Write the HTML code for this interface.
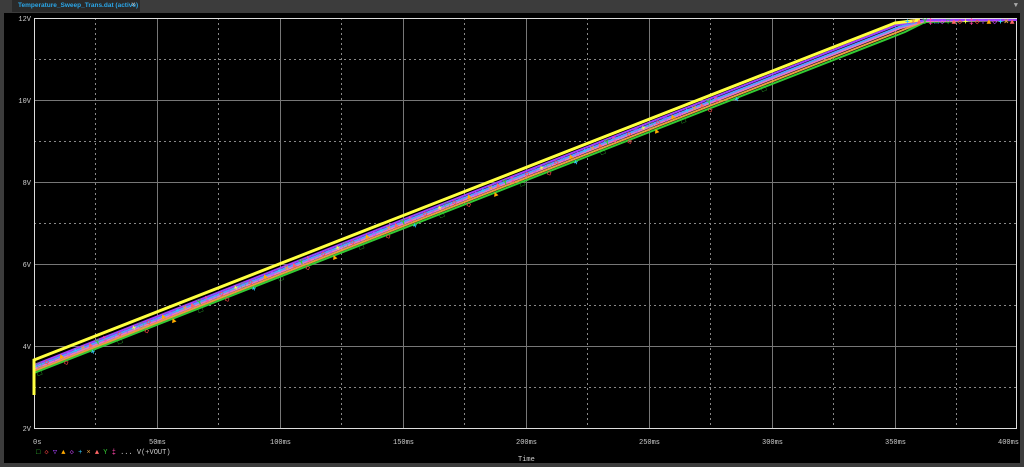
<!DOCTYPE html><html><head><style>
body{margin:0;width:1024px;height:467px;background:#3c3c3c;overflow:hidden;font-family:"Liberation Mono",monospace}
.tab{position:absolute;left:12px;top:0;width:128px;height:12px;background:#2a2a2a;color:#2aa6e8;font:bold 6.5px "Liberation Sans",sans-serif;line-height:12px;padding-left:6px;box-sizing:border-box;white-space:nowrap;overflow:hidden}
.x{position:absolute;left:131px;top:0;color:#bbb;font-size:8px;line-height:12px}
.main{position:absolute;left:4px;top:13px;width:1016px;height:450px;background:#000}
</style></head><body>
<div class="tab">Temperature_Sweep_Trans.dat (active)</div><div class="x">×</div>
<div style="position:absolute;right:6px;top:2px;color:#aaa;font-size:7px">▼</div>
<div class="main"></div>
<svg width="1024" height="467" style="position:absolute;left:0;top:0" font-family="Liberation Mono,monospace" font-size="7" fill="#ccc">
<defs>
<path id="p1" d="M38,368 L900,30"/>
<path id="p2" d="M38,376 L905,36"/>
<path id="p3" d="M905,24 L1017,24"/>
</defs>
<g stroke="#888" stroke-width="1" stroke-dasharray="2,3">
<line x1="34" x2="1017" y1="59.5" y2="59.5"/><line x1="34" x2="1017" y1="141.5" y2="141.5"/><line x1="34" x2="1017" y1="223.5" y2="223.5"/><line x1="34" x2="1017" y1="305.5" y2="305.5"/><line x1="34" x2="1017" y1="387.5" y2="387.5"/>
<line x1="95.5" x2="95.5" y1="18" y2="428"/><line x1="218.5" x2="218.5" y1="18" y2="428"/><line x1="341.5" x2="341.5" y1="18" y2="428"/><line x1="464.5" x2="464.5" y1="18" y2="428"/><line x1="587.5" x2="587.5" y1="18" y2="428"/><line x1="710.5" x2="710.5" y1="18" y2="428"/><line x1="833.5" x2="833.5" y1="18" y2="428"/><line x1="956.5" x2="956.5" y1="18" y2="428"/>
</g>
<g stroke="#777" stroke-width="1">
<line x1="34" x2="1017" y1="100.5" y2="100.5"/><line x1="34" x2="1017" y1="182.5" y2="182.5"/><line x1="34" x2="1017" y1="264.5" y2="264.5"/><line x1="34" x2="1017" y1="346.5" y2="346.5"/>
<line x1="157.5" x2="157.5" y1="18" y2="428"/><line x1="280.5" x2="280.5" y1="18" y2="428"/><line x1="403.5" x2="403.5" y1="18" y2="428"/><line x1="526.5" x2="526.5" y1="18" y2="428"/><line x1="649.5" x2="649.5" y1="18" y2="428"/><line x1="772.5" x2="772.5" y1="18" y2="428"/><line x1="895.5" x2="895.5" y1="18" y2="428"/>
</g>
<rect x="34.5" y="18.5" width="982" height="410" fill="none" stroke="#ddd"/>
<g fill="none" stroke-width="2">
<polyline stroke="#3c3" points="34,373 905,32 925,22 1017,20"/>
<polyline stroke="#e8a040" points="34,371 903,30 925,21 1017,20"/>
<polyline stroke="#e878c8" points="34,369 901,28 925,21 1017,20"/>
<polyline stroke="#58a0ff" points="34,367 899,27 925,20 1017,20"/>
<polyline stroke="#a040ff" points="34,365 897,25 925,20 1017,20"/>
<polyline stroke="#ffff40" stroke-width="3" points="34,395 34,360 895,23 920,20"/>
</g>
<g font-size="8" font-weight="bold" letter-spacing="3">
<text><textPath href="#p1"><tspan fill="#3c3">□</tspan><tspan fill="#f44">◇</tspan><tspan fill="#a4f">▽</tspan><tspan fill="#fa0">▲</tspan><tspan fill="#c4f">◇</tspan><tspan fill="#3cf">+</tspan><tspan fill="#e8a040">×</tspan><tspan fill="#f66">▲</tspan><tspan fill="#3c3">Y</tspan><tspan fill="#f4a">‡</tspan><tspan fill="#58f">□</tspan><tspan fill="#f44">◇</tspan><tspan fill="#a4f">▽</tspan><tspan fill="#ff4">+</tspan><tspan fill="#3c3">□</tspan><tspan fill="#f44">◇</tspan><tspan fill="#a4f">▽</tspan><tspan fill="#fa0">▲</tspan><tspan fill="#c4f">◇</tspan><tspan fill="#3cf">+</tspan><tspan fill="#e8a040">×</tspan><tspan fill="#f66">▲</tspan><tspan fill="#3c3">Y</tspan><tspan fill="#f4a">‡</tspan><tspan fill="#58f">□</tspan><tspan fill="#f44">◇</tspan><tspan fill="#a4f">▽</tspan><tspan fill="#ff4">+</tspan><tspan fill="#3c3">□</tspan><tspan fill="#f44">◇</tspan><tspan fill="#a4f">▽</tspan><tspan fill="#fa0">▲</tspan><tspan fill="#c4f">◇</tspan><tspan fill="#3cf">+</tspan><tspan fill="#e8a040">×</tspan><tspan fill="#f66">▲</tspan><tspan fill="#3c3">Y</tspan><tspan fill="#f4a">‡</tspan><tspan fill="#58f">□</tspan><tspan fill="#f44">◇</tspan><tspan fill="#a4f">▽</tspan><tspan fill="#ff4">+</tspan><tspan fill="#3c3">□</tspan><tspan fill="#f44">◇</tspan><tspan fill="#a4f">▽</tspan><tspan fill="#fa0">▲</tspan><tspan fill="#c4f">◇</tspan><tspan fill="#3cf">+</tspan><tspan fill="#e8a040">×</tspan><tspan fill="#f66">▲</tspan><tspan fill="#3c3">Y</tspan><tspan fill="#f4a">‡</tspan><tspan fill="#58f">□</tspan><tspan fill="#f44">◇</tspan><tspan fill="#a4f">▽</tspan><tspan fill="#ff4">+</tspan><tspan fill="#3c3">□</tspan><tspan fill="#f44">◇</tspan><tspan fill="#a4f">▽</tspan><tspan fill="#fa0">▲</tspan><tspan fill="#c4f">◇</tspan><tspan fill="#3cf">+</tspan><tspan fill="#e8a040">×</tspan><tspan fill="#f66">▲</tspan><tspan fill="#3c3">Y</tspan><tspan fill="#f4a">‡</tspan><tspan fill="#58f">□</tspan><tspan fill="#f44">◇</tspan><tspan fill="#a4f">▽</tspan><tspan fill="#ff4">+</tspan><tspan fill="#3c3">□</tspan><tspan fill="#f44">◇</tspan><tspan fill="#a4f">▽</tspan><tspan fill="#fa0">▲</tspan><tspan fill="#c4f">◇</tspan><tspan fill="#3cf">+</tspan><tspan fill="#e8a040">×</tspan><tspan fill="#f66">▲</tspan><tspan fill="#3c3">Y</tspan><tspan fill="#f4a">‡</tspan><tspan fill="#58f">□</tspan><tspan fill="#f44">◇</tspan><tspan fill="#a4f">▽</tspan><tspan fill="#ff4">+</tspan><tspan fill="#3c3">□</tspan><tspan fill="#f44">◇</tspan><tspan fill="#a4f">▽</tspan><tspan fill="#fa0">▲</tspan><tspan fill="#c4f">◇</tspan><tspan fill="#3cf">+</tspan><tspan fill="#e8a040">×</tspan><tspan fill="#f66">▲</tspan><tspan fill="#3c3">Y</tspan><tspan fill="#f4a">‡</tspan></textPath></text>
<text letter-spacing="24"><textPath href="#p2"><tspan fill="#3c3">□</tspan><tspan fill="#f44">◇</tspan><tspan fill="#3cf">+</tspan><tspan fill="#3c3">□</tspan><tspan fill="#f44">◇</tspan><tspan fill="#fa0">▲</tspan><tspan fill="#3c3">□</tspan><tspan fill="#f44">◇</tspan><tspan fill="#3cf">+</tspan><tspan fill="#3c3">□</tspan><tspan fill="#f44">◇</tspan><tspan fill="#fa0">▲</tspan><tspan fill="#3c3">□</tspan><tspan fill="#f44">◇</tspan><tspan fill="#3cf">+</tspan><tspan fill="#3c3">□</tspan><tspan fill="#f44">◇</tspan><tspan fill="#fa0">▲</tspan><tspan fill="#3c3">□</tspan><tspan fill="#f44">◇</tspan><tspan fill="#3cf">+</tspan><tspan fill="#3c3">□</tspan><tspan fill="#f44">◇</tspan><tspan fill="#fa0">▲</tspan><tspan fill="#3c3">□</tspan><tspan fill="#f44">◇</tspan><tspan fill="#3cf">+</tspan><tspan fill="#3c3">□</tspan></textPath></text>
<text letter-spacing="1"><textPath href="#p3"><tspan fill="#3cf">+</tspan><tspan fill="#e8a040">×</tspan><tspan fill="#f66">▲</tspan><tspan fill="#3c3">Y</tspan><tspan fill="#f4a">‡</tspan><tspan fill="#58f">□</tspan><tspan fill="#c4f">◇</tspan><tspan fill="#3c3">▽</tspan><tspan fill="#f66">▲</tspan><tspan fill="#f44">◇</tspan><tspan fill="#ff4">+</tspan><tspan fill="#f4a">‡</tspan><tspan fill="#f44">◇</tspan><tspan fill="#a4f">▽</tspan><tspan fill="#fa0">▲</tspan><tspan fill="#c4f">◇</tspan><tspan fill="#3cf">+</tspan><tspan fill="#e8a040">×</tspan><tspan fill="#f66">▲</tspan><tspan fill="#3c3">Y</tspan><tspan fill="#58f">□</tspan></textPath></text>
</g>
<g text-anchor="end"><text x="31" y="21">12V</text><text x="31" y="103">10V</text><text x="31" y="185">8V</text><text x="31" y="267">6V</text><text x="31" y="349">4V</text><text x="31" y="431">2V</text></g>
<g><text x="33" y="444">0s</text><text x="149" y="444">50ms</text><text x="270" y="444">100ms</text><text x="393" y="444">150ms</text><text x="516" y="444">200ms</text><text x="639" y="444">250ms</text><text x="762" y="444">300ms</text><text x="885" y="444">350ms</text><text x="998" y="444">400ms</text></g>
<text x="518" y="461">Time</text>
<text x="36" y="454"><tspan fill="#3c3">□</tspan> <tspan fill="#f44">◇</tspan> <tspan fill="#a4f">▽</tspan> <tspan fill="#fa0">▲</tspan> <tspan fill="#c4f">◇</tspan> <tspan fill="#3cf">+</tspan> <tspan fill="#e8a040">×</tspan> <tspan fill="#f66">▲</tspan> <tspan fill="#3c3">Y</tspan> <tspan fill="#f4a">‡</tspan> ... V(+VOUT)</text>
</svg>
</body></html>
